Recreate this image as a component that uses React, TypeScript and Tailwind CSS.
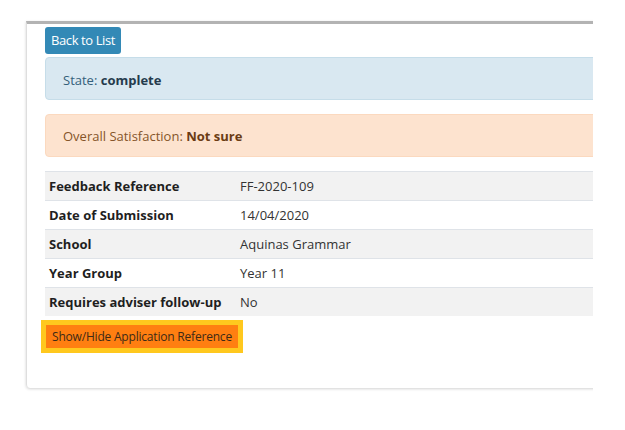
const rows = [
  { label: "Feedback Reference", value: "FF-2020-109" },
  { label: "Date of Submission", value: "14/04/2020" },
  { label: "School", value: "Aquinas Grammar" },
  { label: "Year Group", value: "Year 11" },
  { label: "Requires adviser follow-up", value: "No" },
];

const App = () => {
  return (
    <div className="w-[625px] h-[430px] bg-white overflow-hidden font-['Open_Sans',sans-serif]">
      <div className="w-[593px] pt-[21px] pl-[26px] pb-[6px] overflow-hidden">
        <div className="w-[700px] border-t-[3px] border-t-[#b3b3b3] border-l border-l-[#dedede] rounded-bl shadow-[0_1px_3px_rgba(0,0,0,0.18)] pl-[18px] pt-[3px] pb-[40px]">
          <button className="h-[27px] w-[76px] bg-[#3389b6] rounded-[3px] text-white text-[13px] tracking-[-0.4px]">
            Back to List
          </button>

          <div className="mt-[3px] h-[43px] flex items-center pl-[17px] pt-[3px] bg-[#d9e8f1] border border-[#c6dde9] rounded text-[13px] text-[#34607a]">
            State:&nbsp;<span className="font-bold text-[#253b4d]">complete</span>
          </div>

          <div className="mt-[14px] h-[43px] flex items-center pl-[17px] pt-[2px] bg-[#fde3cf] border border-[#fbd9bf] rounded text-[13px] text-[#85552a]">
            Overall Satisfaction:&nbsp;<span className="font-bold text-[#6b3c14]">Not sure</span>
          </div>

          <div className="mt-[14px] text-[13px] text-[#222]">
            {rows.map((row, i) => (
              <div
                key={row.label}
                className={`h-[29px] flex items-center pt-[1px] border-t border-[#dfe3e8] ${i % 2 === 0 ? "bg-[#f2f2f2]" : "bg-white"}`}
              >
                <div className="w-[191px] pl-[4px] font-bold text-[#1f1f1f]">{row.label}</div>
                <div className="pl-[4px] text-[#333]">{row.value}</div>
              </div>
            ))}
          </div>

          <button className="mt-[9px] ml-[1px] h-[23px] w-[192px] bg-[#ff7f11] outline-[5px] outline-solid outline-[#ffc81e] text-[12px] text-[#3d2a17] tracking-[-0.2px]">
            Show/Hide Application Reference
          </button>
        </div>
      </div>
    </div>
  );
};

export default App;
